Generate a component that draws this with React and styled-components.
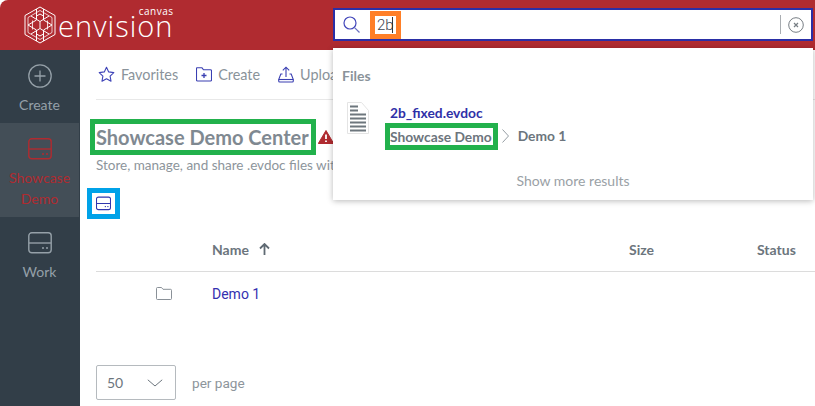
import React from "react";
import styled, { createGlobalStyle } from "styled-components";

const Global = createGlobalStyle`
  html, body { margin: 0; padding: 0; height: 100%; background: #fff; overflow: hidden; }
  #root { height: 406px; }
  * { box-sizing: border-box; }
`;
const Page = styled.div`
  width: 815px; height: 406px; position: relative; overflow: hidden;
  font-family: Lato, "Open Sans", sans-serif; color: #6c757d; background: #fff;
`;
const Header = styled.header`
  height: 50px; background: #b02b30; border-radius: 8px 0 0 0;
  display: flex; align-items: center; padding: 0 2px 0 24px;
`;
const Logo = styled.div`
  display: flex; align-items: center; gap: 2px; color: #fff; width: 309px;
`;
const LogoWords = styled.div`
  position: relative; font-family: "Open Sans", sans-serif; font-weight: 300;
  font-size: 29px; line-height: 36px; letter-spacing: 1.05px; margin-top: 1px;
`;
const Canvas = styled.span`
  position: absolute; right: 0; top: -3px; font-size: 10px; line-height: 12px; letter-spacing: 0.5px;
  font-weight: 400;
`;
const Search = styled.div`
  width: 480px; height: 33px; margin-top: -1px; background: #fff; border: 2px solid #2a2fa6;
  display: flex; align-items: center; padding: 0 7px 0 8px;
`;
const Query = styled.span`
  margin-left: 15px; padding-left: 2px; font-family: Roboto, sans-serif; font-size: 15px; font-weight: 300; color: #3b4651;
  width: 21px; height: 18px; line-height: 18px; outline: 5px solid #ff7f27; position: relative;
  &::after { content: ""; position: absolute; left: 17px; top: 1px; height: 16px; width: 1px; background: #333; }
`;
const ClearZone = styled.div`
  margin-left: auto; display: flex; align-items: center; height: 19px;
  border-left: 1px solid #a9adb1; padding-left: 7px;
`;
const Body = styled.div`display: flex; height: 356px;`;
const Side = styled.nav`
  width: 80px; flex: none; background: #323e48; display: flex; flex-direction: column;
`;
const SideItem = styled.div`
  width: 79px; display: flex; flex-direction: column; align-items: center;
  padding-top: ${p => p.$top}px; height: ${p => p.$h}px;
  background: ${p => p.$active ? "#434e57" : "transparent"};
  color: ${p => p.$active ? "#b02b30" : "#95a0a8"};
  font-size: 14px; line-height: 21px; text-align: center;
`;
const SideLabel = styled.span`margin-top: ${p => p.$mt}px;`;
const Main = styled.main`flex: 1; min-width: 0; padding-left: 16px;`;
const Toolbar = styled.div`
  height: 50px; border-bottom: 1px solid #e8e8e8; display: flex; align-items: center; gap: 18px; padding-left: 2px;
  white-space: nowrap; overflow: hidden;
`;
const Tool = styled.span`
  display: inline-flex; align-items: center; gap: 6px; font-size: 14.4px; color: #8a939a;
`;
const Title = styled.h1`
  margin: 25px 0 0; font-size: 20px; line-height: 26px; font-weight: 700; color: #7f8991; display: flex; align-items: center;
`;
const TitleText = styled.span`outline: 5px solid #22b14c; outline-offset: 1px; height: 24px; line-height: 24px; padding-right: 1px;`;
const Warn = styled.span`margin-left: 8px; display: inline-flex;`;
const Desc = styled.p`margin: 7px 0 0; font-size: 13.5px; line-height: 18px; color: #8d959b; white-space: nowrap;`;
const ViewBtn = styled.div`
  width: 23px; height: 21px; margin: 19px 0 0 -4px; padding: 3px 4px; display: flex; outline: 5px solid #00a2e8;
  background: #fff;
`;
const TableHead = styled.div`
  margin-top: 19px; height: 39px; border-bottom: 1px solid #dcdcdc; display: grid;
  grid-template-columns: 116px 417px 128px 1fr; align-items: center;
  font-size: 14px; font-weight: 700; color: #6c757d; padding-bottom: 6px; white-space: nowrap;
`;
const NameHead = styled.span`display: inline-flex; align-items: center; gap: 10px;`;
const Row = styled.div`
  height: 43px; display: grid; grid-template-columns: 60px 56px 1fr; align-items: center; font-size: 14px;
`;
const RowIcon = styled.span`grid-column: 2; display: flex;`;
const RowLink = styled.a`color: #3430b0; font-family: Roboto, Lato, sans-serif;`;
const Pager = styled.div`margin-top: 50px; display: flex; align-items: center; gap: 16px;`;
const PageSelect = styled.div`
  width: 80px; height: 35px; border: 1px solid #b5babe; border-radius: 2px; display: flex; align-items: center;
  justify-content: space-between; padding: 0 12px 0 10px; font-size: 14px; color: #6c757d;
`;
const PerPage = styled.span`font-size: 13.6px; color: #8d959b; font-family: Roboto, Lato, sans-serif;`;
const Dropdown = styled.div`
  position: absolute; left: 333px; top: 48px; width: 480px; height: 152px; background: #fff;
  box-shadow: 0 1px 6px rgba(0,0,0,.28); padding: 20px 9px 0; display: flex; flex-direction: column;
`;
const Group = styled.div`font-size: 14px; font-weight: 700; color: #8a939a; line-height: 16px;`;
const Hit = styled.div`display: flex; margin: 18px 0 0 5px;`;
const HitText = styled.div`margin-left: 21px; padding-top: 3px; display: flex; flex-direction: column; gap: 6px;`;
const HitName = styled.a`font-size: 13.8px; font-weight: 700; color: #2f31a8; line-height: 16px;`;
const Crumbs = styled.div`display: flex; align-items: center; font-size: 13.8px; font-weight: 700; color: #6c757d; line-height: 18px;`;
const CrumbBox = styled.span`outline: 5px solid #22b14c; outline-offset: 0; line-height: 17px; padding: 0 1px 0 0;`;
const CrumbSep = styled.span`display: inline-flex; margin: 0 9px 0 9px;`;
const More = styled.div`margin-top: 27px; text-align: center; font-size: 14px; color: #9aa1a6;`;

const Drive = ({ c, w = 24, h = 22, sw = 1.4 }) => (
  <svg width={w} height={h} viewBox="0 0 24 22" fill="none" stroke={c} strokeWidth={sw}>
    <rect x="0.8" y="0.8" width="22.4" height="20" rx="3" />
    <path d="M1 11h22" />
    <path d="M14 16h2M18 16h2" strokeWidth="1.6" />
  </svg>
);
const HexLogo = () => (
  <svg width="32" height="38" viewBox="0 0 32 38" fill="none" stroke="#fff" strokeWidth="1">
    <path d="M16 1 31 9.5v19L16 37 1 28.5v-19z" />
    <path d="M16 4.5 28 11.5v15L16 33.5 4 26.5v-15z" opacity=".75" />
    <path d="M12.500 3v11L4 19l8.500 5v11M19.500 3v11l8.500 5-8.500 5v11" />
    <path d="M7 10l9 5.500L25 10M7 28l9-5.500L25 28M16 15.500v7" />
    <path d="M8.500 14.500v9M23.500 14.500v9" opacity=".8" />
    <path d="M16 8l3.500 2M16 8l-3.500 2M16 30l3.500-2M16 30l-3.500-2" />
  </svg>
);
const Star = () => (
  <svg width="17" height="17" viewBox="0 0 17 17" fill="none" stroke="#3f44b8" strokeWidth="1.1" strokeLinejoin="round">
    <path d="M8.500 1.200l2.200 4.700 5.100.7-3.700 3.500.9 5.100-4.500-2.500-4.500 2.500.9-5.100L1.200 6.600l5.100-.7z" />
  </svg>
);
const FolderPlus = () => (
  <svg width="16" height="15" viewBox="0 0 16 15" fill="none" stroke="#3a3fb2" strokeWidth="1.1">
    <path d="M1.500.800h4.500l1.500 2h7a1 1 0 0 1 1 .9v9.300a1 1 0 0 1-1 1h-13a1 1 0 0 1-1-1V1.500a.8.800 0 0 1 .5-.7z" />
    <path d="M8 6v5M5.500 8.500h5" strokeWidth="1.300" />
  </svg>
);
const Upload = () => (
  <svg width="16" height="17" viewBox="0 0 16 17" fill="none" stroke="#3a3fb2" strokeWidth="1.1">
    <path d="M8 11V1.200M4.800 4.300 8 1.200l3.200 3.100" />
    <path d="M4.500 8H2.800L.7 13.500V15a1 1 0 0 0 1 1h12.600a1 1 0 0 0 1-1v-1.500L13.200 8h-1.700" />
    <path d="M.8 13.500h14.400" />
  </svg>
);
const Warning = () => (
  <svg width="16" height="14" viewBox="0 0 16 14">
    <path d="M8 .5 15.700 13.500H.3z" fill="#b02b30" stroke="#b02b30" strokeLinejoin="round" />
    <path d="M8 4.500v4.500M8 10.500v1.500" stroke="#fff" strokeWidth="1.800" />
  </svg>
);
const SearchIcon = () => (
  <svg width="17" height="17" viewBox="0 0 17 17" fill="none" stroke="#4246ba" strokeWidth="1.2">
    <circle cx="7" cy="7" r="6" />
    <path d="M11.300 11.300 16.500 16.500" stroke="#6a6fc0" />
  </svg>
);
const ClearIcon = () => (
  <svg width="16" height="16" viewBox="0 0 16 16" fill="none" stroke="#777e84" strokeWidth="1">
    <circle cx="8" cy="8" r="7.300" />
    <path d="M6 6l4 4M10 6l-4 4" strokeWidth="1.200" />
  </svg>
);
const PlusCircle = () => (
  <svg width="24" height="24" viewBox="0 0 24 24" fill="none" stroke="#95a0a8" strokeWidth="1.300">
    <circle cx="12" cy="12" r="11.200" />
    <path d="M12 6.500v11M6.500 12h11" />
  </svg>
);
const DocIcon = () => (
  <svg width="22" height="32" viewBox="0 0 22 32" fill="none">
    <path d="M.5.500h14l7 8v23H.5z" fill="#fff" stroke="#e4e4e4" />
    <path d="M3 4.500h8M3 8.500h8M3 12.500h16M3 16.500h16M3 20.500h16M3 24.500h16M3 28.500h16" stroke="#6d767d" strokeWidth="2" />
  </svg>
);
const Folder = () => (
  <svg width="16" height="13" viewBox="0 0 16 13" fill="none" stroke="#7d858c" strokeWidth="0.9">
    <path d="M1.500.500h4l1.500 1.800h7.500a1 1 0 0 1 1 1v8.200a1 1 0 0 1-1 1h-13a1 1 0 0 1-1-1v-10a1 1 0 0 1 1-1z" />
  </svg>
);
const ArrowUp = () => (
  <svg width="11" height="12" viewBox="0 0 11 12" fill="none" stroke="#5f6a73" strokeWidth="1.800">
    <path d="M5.500 12V1.500M1 5.500 5.500 1 10 5.500" />
  </svg>
);
const ChevronDown = () => (
  <svg width="16" height="8" viewBox="0 0 16 8" fill="none" stroke="#6c757d" strokeWidth="1">
    <path d="M.8.800 8 7 15.200.800" />
  </svg>
);
const ChevronRight = () => (
  <svg width="7" height="14" viewBox="0 0 7 14" fill="none" stroke="#8a939a" strokeWidth="0.9">
    <path d="M.5.500 6.500 7 .5 13.500" />
  </svg>
);

export default function App() {
  return (
    <Page>
      <Global />
      <Header>
        <Logo>
          <HexLogo />
          <LogoWords>envision<Canvas>canvas</Canvas></LogoWords>
        </Logo>
        <Search>
          <SearchIcon />
          <Query>2b</Query>
          <ClearZone><ClearIcon /></ClearZone>
        </Search>
      </Header>
      <Body>
        <Side>
          <SideItem $h={73} $top={14}>
            <PlusCircle />
            <SideLabel $mt={6}>Create</SideLabel>
          </SideItem>
          <SideItem $active $h={94} $top={15}>
            <Drive c="#b02b30" />
            <SideLabel $mt={7}>Showcase Demo</SideLabel>
          </SideItem>
          <SideItem $h={70} $top={15}>
            <Drive c="#95a0a8" />
            <SideLabel $mt={7}>Work</SideLabel>
          </SideItem>
        </Side>
        <Main>
          <Toolbar>
            <Tool><Star />Favorites</Tool>
            <Tool><FolderPlus />Create</Tool>
            <Tool><Upload />Upload</Tool>
          </Toolbar>
          <Title>
            <TitleText>Showcase Demo Center</TitleText>
            <Warn><Warning /></Warn>
          </Title>
          <Desc>Store, manage, and share .evdoc files with your team</Desc>
          <ViewBtn><Drive c="#3036ae" w={16} h={15} sw={1.700} /></ViewBtn>
          <TableHead>
            <span />
            <NameHead>Name <ArrowUp /></NameHead>
            <span>Size</span>
            <span>Status</span>
          </TableHead>
          <Row>
            <RowIcon><Folder /></RowIcon>
            <RowLink>Demo 1</RowLink>
          </Row>
          <Pager>
            <PageSelect>50 <ChevronDown /></PageSelect>
            <PerPage>per page</PerPage>
          </Pager>
        </Main>
      </Body>
      <Dropdown>
        <Group>Files</Group>
        <Hit>
          <DocIcon />
          <HitText>
            <HitName>2b_fixed.evdoc</HitName>
            <Crumbs>
              <CrumbBox>Showcase Demo</CrumbBox>
              <CrumbSep><ChevronRight /></CrumbSep>
              Demo 1
            </Crumbs>
          </HitText>
        </Hit>
        <More>Show more results</More>
      </Dropdown>
    </Page>
  );
}
